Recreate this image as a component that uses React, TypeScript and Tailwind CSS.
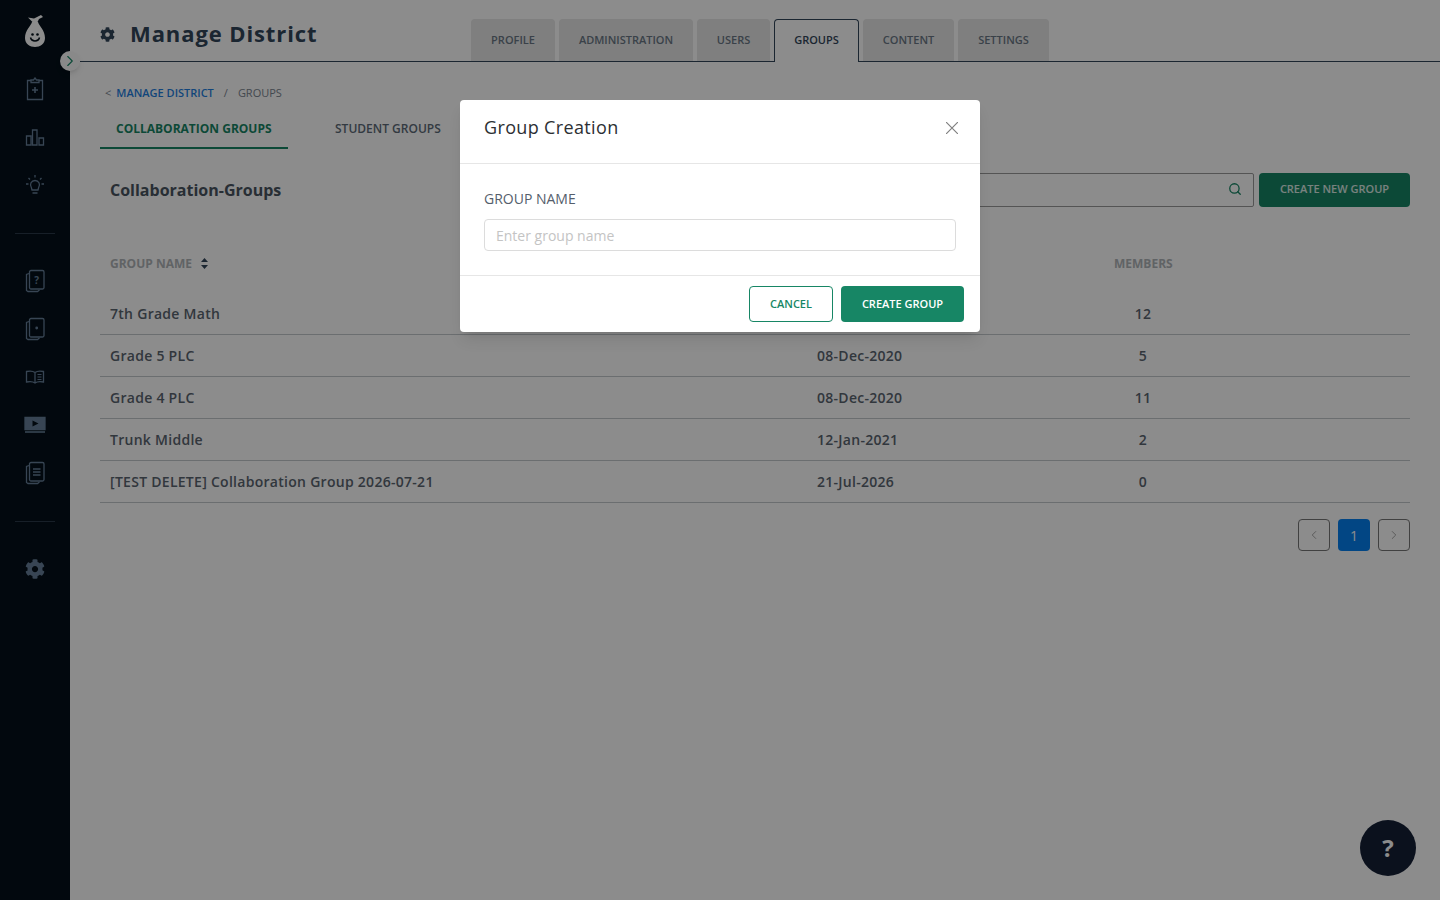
import { FaCog } from "react-icons/fa";
import { ChevronLeft, ChevronRight, Search } from "lucide-react";

const topTabs = [
    { label: "PROFILE", width: "w-[84px]" },
    { label: "ADMINISTRATION", width: "w-[134px]" },
    { label: "USERS", width: "w-[73px]" },
    { label: "GROUPS", width: "w-[85px]", active: true },
    { label: "CONTENT", width: "w-[91px]" },
    { label: "SETTINGS", width: "w-[91px]" },
];

const groups = [
    { name: "7th Grade Math", date: "", members: "12" },
    { name: "Grade 5 PLC", date: "08-Dec-2020", members: "5" },
    { name: "Grade 4 PLC", date: "08-Dec-2020", members: "11" },
    { name: "Trunk Middle", date: "12-Jan-2021", members: "2" },
    { name: "[TEST DELETE] Collaboration Group 2026-07-21", date: "21-Jul-2026", members: "0" },
];

function NavIcon({ children }: { children: React.ReactNode }) {
    return <div className="h-[48px] flex items-center justify-center">
        <svg width="24" height="24" viewBox="0 0 24 24" fill="none" stroke="#667f99" strokeWidth="1.3">
            {children}
        </svg>
    </div>;
}

function Cards({ children }: { children?: React.ReactNode }) {
    return <NavIcon>
        <path d="M6 4.5 3.5 5.5V21.5L5 22.5H14.5L16.5 21" />
        <rect x="6.5" y="1.5" width="14.5" height="18.5" rx="1.5" />
        {children}
    </NavIcon>;
}

function Logo() {
    return <svg width="24" height="34" viewBox="0 0 24 34">
        <path d="M5 3.500 11 4.500 18 1 20 3 16 5 14.500 8H9.500Z" fill="#fff" />
        <path d="M9 8H15C16 12 22 16 22 24 22 30 17 33 12 33 7 33 2 30 2 24 2 16 8 12 9 8Z" fill="#fff" />
        <circle cx="9.500" cy="20.500" r="1.300" fill="#04101a" />
        <circle cx="14.500" cy="20.500" r="1.300" fill="#04101a" />
        <path d="M7.500 23.500C8.500 28 15.500 28 16.500 23.500" fill="none" stroke="#04101a" strokeWidth="1.500" />
    </svg>;
}

function Sidebar() {
    return <aside className="w-[70px] shrink-0 bg-[#04101a] flex flex-col items-center relative">
        <div className="pt-[14px] h-[65px]"><Logo /></div>

        <NavIcon>
            <path d="M8 3.5H4.5V22.5H19.5V3.5H16" />
            <path d="M8 5.5V3H10.5L12 1 13.5 3H16V5.5Z" />
            <path d="M12 10V16M9 13H15" strokeWidth="1.6" />
        </NavIcon>
        <NavIcon>
            <path d="M3.500 11H8V20H3.500ZM9.500 5H14V20H9.500ZM16 13H20.500V20H16Z" />
        </NavIcon>
        <NavIcon>
            <path d="M8.500 15C6 11 8.500 7.500 12 7.500 15.500 7.500 18 11 15.500 15L15 17H9Z" />
            <path d="M9.500 20H14.500M12 2V4.500M3 11H5.500M18.500 11H21M5.500 5 7 6.500M18.500 5 17 6.500" />
        </NavIcon>

        <div className="w-[40px] h-px bg-[#2b3a4a] mt-[24px] mb-[23px]" />

        <Cards>
            <text x="13.700" y="14.500" textAnchor="middle" fontSize="10" fontWeight="700" fill="#667f99" stroke="none" fontFamily="Open Sans">?</text>
        </Cards>
        <Cards><circle cx="13.700" cy="11" r="1.400" fill="#667f99" stroke="none" /></Cards>
        <NavIcon>
            <path d="M12 7.500C10 6 6 6 3.500 6.500V17C6 16.500 10 16.500 12 18 14 16.500 18 16.500 20.500 17V6.500C18 6 14 6 12 7.500ZM12 7.500V18" />
            <path d="M14.500 9.500H18.500M14.500 12H18.500M14.500 14.500H18.500" strokeWidth="1" />
        </NavIcon>
        <NavIcon>
            <path d="M2 4.500H22V16.500H2Z" fill="#667f99" />
            <path d="M9.500 7.500 15.500 10.500 9.500 13.500Z" fill="#04101a" stroke="none" />
            <path d="M2 19H22" strokeWidth="1.600" />
        </NavIcon>
        <Cards>
            <path d="M10 8H17.500M10 11H17.500M10 14H17.500" />
        </Cards>

        <div className="w-[40px] h-px bg-[#2b3a4a] mt-[24px] mb-[23px]" />

        <div className="h-[48px] flex items-center justify-center text-[#667f99] text-[20px]"><FaCog /></div>

        <button className="absolute top-[51px] left-[60px] w-[20px] h-[20px] rounded-full bg-[#fafafa] shadow-md flex items-center justify-center text-[#178665]">
            <ChevronRight size={18} strokeWidth={1.5} />
        </button>
    </aside>;
}

function Header() {
    return <header className="ml-[10px] h-[62px] border-b border-[#32465a] flex items-end shrink-0">
        <div className="w-[391px] h-full pl-[20px] flex items-center gap-[15px] pt-[4px]">
            <FaCog className="text-[#32465a] text-[15px] mt-[4px]" />
            <h1 className="text-[22px] leading-[32px] font-bold tracking-[0.9px] text-[#32465a]">Manage District</h1>
        </div>

        <nav className="flex items-end gap-[4px] h-[42px]">
            {topTabs.map(tab => <div
                key={tab.label}
                className={`${tab.width} flex items-center justify-center text-[11px] rounded-t-[4px] font-semibold ${tab.active
                    ? "bg-white border border-b-0 border-[#32465a] text-[#32465a] mb-[-1px] h-[43px] pb-[2px]"
                    : "bg-[#e7e7e7] text-[#6a7785] h-[42px]"}`}
            >
                {tab.label}
            </div>)}
        </nav>
    </header>;
}

function GroupsTable() {
    return <section>
        <div className="grid grid-cols-[707px_297px_1fr] items-center h-[40px] text-[12px] font-bold text-[#b0b4b8] pl-[10px] mt-[37px]">
            <div className="flex items-center gap-[9px]">
                GROUP NAME
                <svg className="mb-[2px]" width="7" height="11" viewBox="0 0 7 11" fill="#32465a"><path d="M3.500 0 7 4H0ZM3.500 11 0 7H7Z" /></svg>
            </div>
            <div />
            <div className="w-[58px] text-center">MEMBERS</div>
        </div>

        <div className="mt-[9px]">
            {groups.map(g => <div key={g.name} className="grid grid-cols-[707px_297px_1fr] items-center h-[42px] border-b border-[#c4c8cc] text-[14px] font-semibold tracking-[0.28px] text-[#5a6470] pl-[10px]">
                <div>{g.name}</div>
                <div>{g.date}</div>
                <div className="w-[58px] text-center">{g.members}</div>
            </div>)}
        </div>

        <div className="flex justify-end gap-[8px] mt-[16px]">
            <button className="w-[32px] h-[32px] rounded-[4px] border border-[#777] flex items-center justify-center text-[#999]"><ChevronLeft size={14} strokeWidth={1.5} /></button>
            <button className="w-[32px] h-[32px] rounded-[4px] bg-[#0480f0] text-white text-[14px]">1</button>
            <button className="w-[32px] h-[32px] rounded-[4px] border border-[#777] flex items-center justify-center text-[#999]"><ChevronRight size={14} strokeWidth={1.5} /></button>
        </div>
    </section>;
}

function GroupCreationModal() {
    return <div className="absolute inset-0 bg-black/45 flex justify-center items-start pt-[100px]">
        <div className="w-[520px] bg-white rounded-[4px] shadow-lg">
            <div className="h-[64px] border-b border-[#e6e6e6] flex items-center justify-between pl-[24px] pr-[22px] pb-[8px]">
                <h2 className="text-[18px] tracking-[0.35px] text-[#2c2f33]">Group Creation</h2>
                <svg width="12" height="12" viewBox="0 0 12 12" stroke="#808080" strokeWidth="1.2"><path d="M0 0 12 12M12 0 0 12" /></svg>
            </div>
            <div className="h-[112px] border-b border-[#e6e6e6] px-[24px] pt-[25px]">
                <label className="block text-[14px] leading-[20px] text-[#555e6b]">GROUP NAME</label>
                <input
                    placeholder="Enter group name"
                    className="mt-[10px] w-full h-[32px] rounded-[4px] border border-[#dcdcdc] px-[11px] text-[14px] outline-none placeholder:text-[#c4c4c4]"
                />
            </div>
            <div className="h-[56px] flex justify-end items-center gap-[8px] pr-[16px]">
                <button className="w-[84px] h-[36px] rounded-[4px] border border-[#178665] text-[#178665] text-[11px] font-semibold">CANCEL</button>
                <button className="w-[123px] h-[36px] rounded-[4px] bg-[#178665] text-white text-[11px] font-semibold">CREATE GROUP</button>
            </div>
        </div>
    </div>;
}

export default function App() {
    return <div className="relative h-screen overflow-hidden flex bg-white font-['Open_Sans',sans-serif]">
        <Sidebar />

        <main className="flex-1 flex flex-col min-w-0">
            <Header />

            <div className="pl-[30px] pr-[30px]">
                <div className="pl-[5px] pt-[15px] h-[47px] flex items-center gap-[10px] text-[11px] text-[#7b8590]">
                    <span className="flex items-center gap-[5px]">
                        <span>&lt;</span>
                        <a className="text-[#1f7fe0] font-semibold">MANAGE DISTRICT</a>
                    </span>
                    <span>/</span>
                    <span>GROUPS</span>
                </div>

                <div className="flex h-[40px] text-[12px] font-semibold">
                    <div className="w-[188px] pl-[16px] pt-[2px] flex items-center border-b-2 border-[#178665] text-[#178665] font-bold">COLLABORATION GROUPS</div>
                    <div className="pl-[47px] flex items-center text-[#5d6b78]">STUDENT GROUPS</div>
                </div>

                <div className="flex items-center justify-between mt-[24px] h-[34px]">
                    <h3 className="pl-[10px] text-[16px] font-bold text-[#4a5561]">Collaboration-Groups</h3>
                    <div className="flex gap-[5px]">
                        <div className="w-[400px] h-[34px] border border-[#999] rounded-[2px] flex items-center justify-end pr-[11px] pb-[2px] text-[#178665]">
                            <Search size={14} strokeWidth={2.2} />
                        </div>
                        <button className="w-[151px] h-[34px] rounded-[4px] bg-[#178665] text-white/85 text-[11px] font-semibold pb-[2px]">CREATE NEW GROUP</button>
                    </div>
                </div>

                <GroupsTable />
            </div>
        </main>

        <button className="absolute right-[24px] bottom-[24px] w-[56px] h-[56px] rounded-full bg-[#141f36] text-white text-[24px] font-bold flex items-center justify-center">?</button>

        <GroupCreationModal />
    </div>;
}
